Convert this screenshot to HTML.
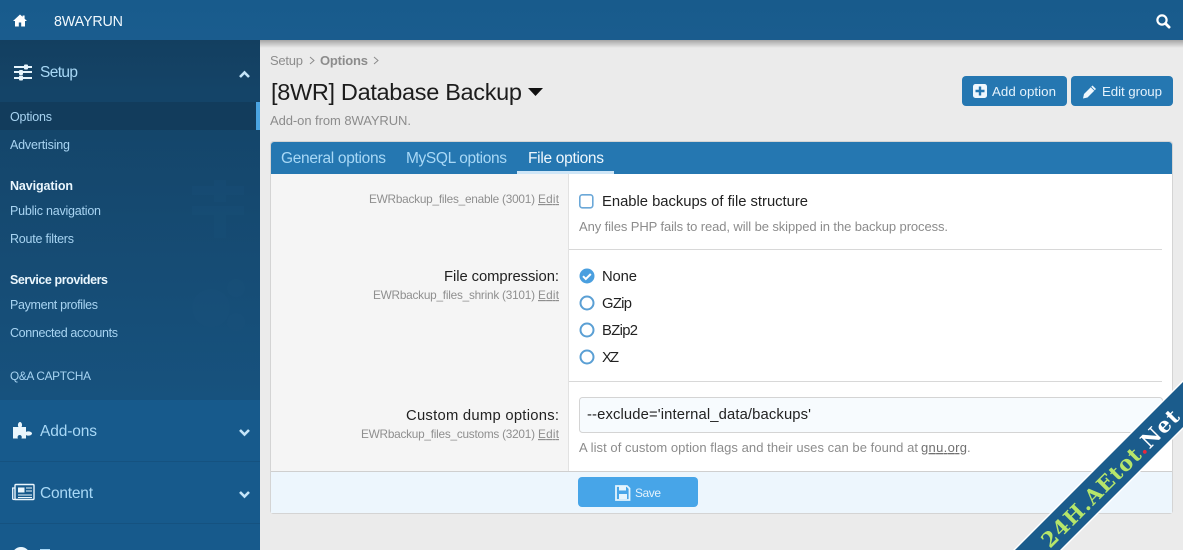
<!DOCTYPE html>
<html lang="en"><head><meta charset="utf-8"><title>[8WR] Database Backup</title>
<style>
html,body{margin:0;padding:0;width:1183px;height:550px;overflow:hidden;background:#ebebeb}
svg{display:block}
text{font-family:"Liberation Sans",Arial,sans-serif}
.nav{font-size:12.5px;fill:#a8d4f2}
.navb{font-size:12.5px;font-weight:bold;fill:#eaf6fd}
.big{font-size:15.5px;fill:#a8d8f6}
.gr{fill:#8c8c8c}
.hint{font-size:11.8px;fill:#8f8f8f}
.lbl{font-size:14.8px;fill:#222}
.tab{font-size:15.5px;fill:#a8d8f6}
.btn{font-size:13.3px;fill:#e4f2fc}
</style></head><body>
<svg width="1183" height="550" viewBox="0 0 1183 550" xmlns="http://www.w3.org/2000/svg">
<defs>
<linearGradient id="h" x1="0" y1="0" x2="0" y2="1"><stop offset="0" stop-color="#185b8c"/><stop offset="1" stop-color="#1a5c8e"/></linearGradient>
<linearGradient id="s" x1="0" y1="0" x2="0" y2="1"><stop offset="0" stop-color="#133f60"/><stop offset=".15" stop-color="#144468"/><stop offset="1" stop-color="#17527e"/></linearGradient>
<linearGradient id="sh" x1="0" y1="0" x2="0" y2="1"><stop offset="0" stop-color="#000" stop-opacity=".3"/><stop offset="1" stop-color="#000" stop-opacity="0"/></linearGradient>
</defs>
<rect width="1183" height="550" fill="#ebebeb"/>

<!-- sidebar -->
<rect x="0" y="40" width="260" height="360" fill="url(#s)"/>
<rect x="0" y="400" width="260" height="150" fill="#175a8c"/>
<rect x="0" y="461" width="260" height="1" fill="#155280"/>
<rect x="0" y="523" width="260" height="1" fill="#155280"/>
<rect x="0" y="102" width="260" height="28" fill="#123c5c"/>
<rect x="256" y="102" width="4" height="28" fill="#4aa3e0"/>

<!-- faint sidebar marks -->
<g fill="#1b527c" opacity=".25">
<rect x="192" y="186" width="52" height="9"/><rect x="192" y="206" width="52" height="9"/>
<rect x="214" y="180" width="12" height="22"/><rect x="214" y="214" width="12" height="24"/>
<circle cx="211" cy="308" r="19"/><circle cx="236" cy="288" r="9"/><circle cx="236" cy="322" r="9"/>
</g>

<!-- header -->
<rect x="260" y="40" width="923" height="8" fill="url(#sh)"/>
<rect x="0" y="0" width="1183" height="40" fill="url(#h)"/>
<path d="M20 14.5 L13 21h2v5.5h3.8v-4h2.4v4H25V21h2l-2.4-2.3V15.5h-2v1.3z" fill="#fff"/>
<text x="54" y="26" font-size="14.3" fill="#f0f8fd" textLength="69">8WAYRUN</text>
<circle cx="1162" cy="20" r="4.6" fill="none" stroke="#fff" stroke-width="2.2"/>
<path d="M1165.5 23.5l3.6 3.6" stroke="#fff" stroke-width="2.8" stroke-linecap="round"/>

<!-- sidebar items -->
<g fill="#e6f4fc">
<rect x="14" y="66" width="18" height="2"/><rect x="14" y="71" width="18" height="2"/><rect x="14" y="77" width="18" height="2"/>
<rect x="24" y="64.5" width="4" height="5" rx="1"/><rect x="19" y="70" width="4" height="5" rx="1"/><rect x="19" y="75.5" width="4" height="5" rx="1"/>
</g>
<text class="big" x="40" y="77" textLength="38">Setup</text>
<path d="M240 77l4.5-4.5 4.5 4.5" fill="none" stroke="#c4e4f8" stroke-width="2.6"/>
<text class="nav" x="10" y="121" textLength="42">Options</text>
<text class="nav" x="10" y="149" textLength="60">Advertising</text>
<text class="navb" x="10" y="190" textLength="63">Navigation</text>
<text class="nav" x="10" y="215" textLength="91">Public navigation</text>
<text class="nav" x="10" y="243" textLength="64">Route filters</text>
<text class="navb" x="10" y="284" textLength="98">Service providers</text>
<text class="nav" x="10" y="309" textLength="88">Payment profiles</text>
<text class="nav" x="10" y="337" textLength="108">Connected accounts</text>
<text class="nav" x="10" y="380" style="font-size:11.8px" textLength="81">Q&amp;A CAPTCHA</text>

<path d="M13 427h5.5c-1.2-1.5-.4-5 1.5-5s2.7 3.500 1.500 5H26v5c1.500-1.300 6-.6 6 1.500s-4.500 2.800-6 1.500v3.500h-4.500c.8-2-.2-3.500-1.800-3.500s-2.600 1.500-1.800 3.500H13z" fill="#eaf6fd"/>
<text class="big" x="40" y="436" textLength="57">Add-ons</text>
<path d="M240 430l4.500 4.500 4.500-4.500" fill="none" stroke="#c4e4f8" stroke-width="2.600"/>

<rect x="15" y="484.500" width="19" height="15" rx="1" fill="none" stroke="#eaf6fd" stroke-width="1.400"/>
<path d="M15 488h-2.300v10.500c0 .6.500 1 1 1H16" fill="none" stroke="#eaf6fd" stroke-width="1.300"/>
<rect x="18" y="487.500" width="6.500" height="5" fill="#eaf6fd"/>
<path d="M26 488h6M26 491h6M18 495h14M18 497.500h14" stroke="#eaf6fd" stroke-width="1"/>
<text class="big" x="40" y="498" textLength="53">Content</text>
<path d="M240 492l4.500 4.500 4.500-4.500" fill="none" stroke="#c4e4f8" stroke-width="2.600"/>
<circle cx="21" cy="556" r="9" fill="#eaf6fd"/>
<rect x="40" y="549" width="10" height="1" fill="#a8d8f6"/>

<!-- top -->
<text class="gr" x="270" y="65" font-size="13" textLength="33">Setup</text>
<path d="M310 57l4 3.500-4 3.500M374 57l4 3.500-4 3.500" fill="none" stroke="#8c8c8c" stroke-width="1"/>
<text class="gr" x="320" y="65" font-size="13" font-weight="bold" textLength="48">Options</text>
<text x="271" y="100" font-size="23.5" fill="#1c1c1c" textLength="251">[8WR] Database Backup</text>
<path d="M528 88h15l-7.500 8z" fill="#111"/>
<text class="gr" x="270" y="125" font-size="13" textLength="141">Add-on from 8WAYRUN.</text>

<rect x="962" y="76" width="105" height="30" rx="4" fill="#2577b1"/>
<rect x="1071" y="76" width="102" height="30" rx="4" fill="#2577b1"/>
<rect x="973" y="84" width="14" height="14" rx="2.500" fill="#eef7fd"/>
<path d="M980 86.500v9M975.500 91h9" stroke="#2577b1" stroke-width="2.400"/>
<text class="btn" x="992" y="96" textLength="64">Add option</text>
<path d="M1083 98.500l1-4.500 8.500-8.500 3.500 3.500-8.500 8.500z" fill="#eef7fd"/>
<path d="M1091 87l3.500 3.500" stroke="#2577b1" stroke-width=".8"/>
<text class="btn" x="1102" y="96" textLength="60">Edit group</text>

<!-- panel -->
<rect x="270.500" y="141.500" width="902" height="372" rx="3" fill="#fff" stroke="#d4d4d4"/>
<path d="M271 174V145a3 3 0 0 1 3-3H1169a3 3 0 0 1 3 3V174z" fill="#2577b1"/>
<rect x="271" y="174" width="297" height="297" fill="#f5f5f5"/>
<rect x="568" y="174" width="1" height="297" fill="#e2e2e2"/>
<text class="tab" x="281" y="163" textLength="105">General options</text>
<text class="tab" x="406" y="163" textLength="101">MySQL options</text>
<text class="tab" x="528" y="163" textLength="76" style="fill:#eef7fd">File options</text>
<rect x="517" y="171" width="97" height="3" fill="#cfe6f7"/>

<!-- rows -->
<text class="hint" x="369" y="203" textLength="166">EWRbackup_files_enable (3001)</text>
<text class="hint" x="538" y="203" textLength="21" text-decoration="underline">Edit</text>
<rect x="579.800" y="194.800" width="13" height="13" rx="2.500" fill="#fff" stroke="#6ba8d8" stroke-width="1.600"/>
<text class="lbl" x="602" y="206" textLength="206">Enable backups of file structure</text>
<text class="gr" x="579" y="231" font-size="13" textLength="369">Any files PHP fails to read, will be skipped in the backup process.</text>
<rect x="569" y="249" width="593" height="1" fill="#d8d8d8"/>

<text class="lbl" x="444" y="281" textLength="115">File compression:</text>
<text class="hint" x="373" y="299" textLength="162">EWRbackup_files_shrink (3101)</text>
<text class="hint" x="538" y="299" textLength="21" text-decoration="underline">Edit</text>
<circle cx="587" cy="276" r="7.500" fill="#4a9fdf"/>
<path d="M583 276.200l2.800 2.800 5-5" fill="none" stroke="#fff" stroke-width="2"/>
<circle cx="587" cy="303" r="6.500" fill="#fff" stroke="#5a9fd4" stroke-width="2"/>
<circle cx="587" cy="330" r="6.500" fill="#fff" stroke="#5a9fd4" stroke-width="2"/>
<circle cx="587" cy="357" r="6.500" fill="#fff" stroke="#5a9fd4" stroke-width="2"/>
<text class="lbl" x="602" y="281" textLength="35">None</text>
<text class="lbl" x="602" y="308" textLength="30">GZip</text>
<text class="lbl" x="602" y="335" textLength="36">BZip2</text>
<text class="lbl" x="602" y="362" textLength="17">XZ</text>
<rect x="569" y="381" width="593" height="1" fill="#d8d8d8"/>

<text class="lbl" x="406" y="420" textLength="153">Custom dump options:</text>
<text class="hint" x="361" y="438" textLength="174">EWRbackup_files_customs (3201)</text>
<text class="hint" x="538" y="438" textLength="21" text-decoration="underline">Edit</text>
<rect x="579.500" y="397.500" width="583" height="35" rx="3" fill="#f7fbfe" stroke="#d4d4d4"/>
<text class="lbl" x="587" y="419" textLength="224">--exclude='internal_data/backups'</text>
<text class="gr" x="579" y="452" font-size="13" textLength="339">A list of custom option flags and their uses can be found at</text>
<text x="921" y="452" font-size="13" fill="#707070" textLength="46" text-decoration="underline">gnu.org</text>
<text class="gr" x="967" y="452" font-size="13">.</text>

<!-- footer -->
<rect x="271" y="471" width="901" height="42" fill="#edf6fd"/>
<rect x="271" y="471" width="901" height="1" fill="#cfcfcf"/>
<rect x="578" y="477" width="120" height="30" rx="4" fill="#47a5e8"/>
<path d="M616 486h11l2.500 2.500V500h-13.500z" fill="none" stroke="#e4f4fd" stroke-width="1.800"/>
<rect x="619" y="486" width="7" height="4.500" fill="#e4f4fd"/>
<rect x="619" y="494" width="8" height="5" fill="#e4f4fd"/>
<text class="btn" x="635" y="497" style="font-size:12px" textLength="26">Save</text>

<!-- ribbon -->
<polygon points="1013,550 1183,380 1183,429 1062,550" fill="#fff"/>
<polygon points="1015,550 1183,382 1183,427 1060,550" fill="#1b5c8c"/>
<g transform="translate(1050 549) rotate(-45)">
<text x="0" y="0" style="font-family:'DejaVu Serif','Liberation Serif',serif;font-weight:bold" font-size="21" fill="#b6e66a" textLength="185">24H.AEtot<tspan fill="#e8283c">.</tspan><tspan fill="#fff">Net</tspan></text>
</g>
</svg>
</body></html>
